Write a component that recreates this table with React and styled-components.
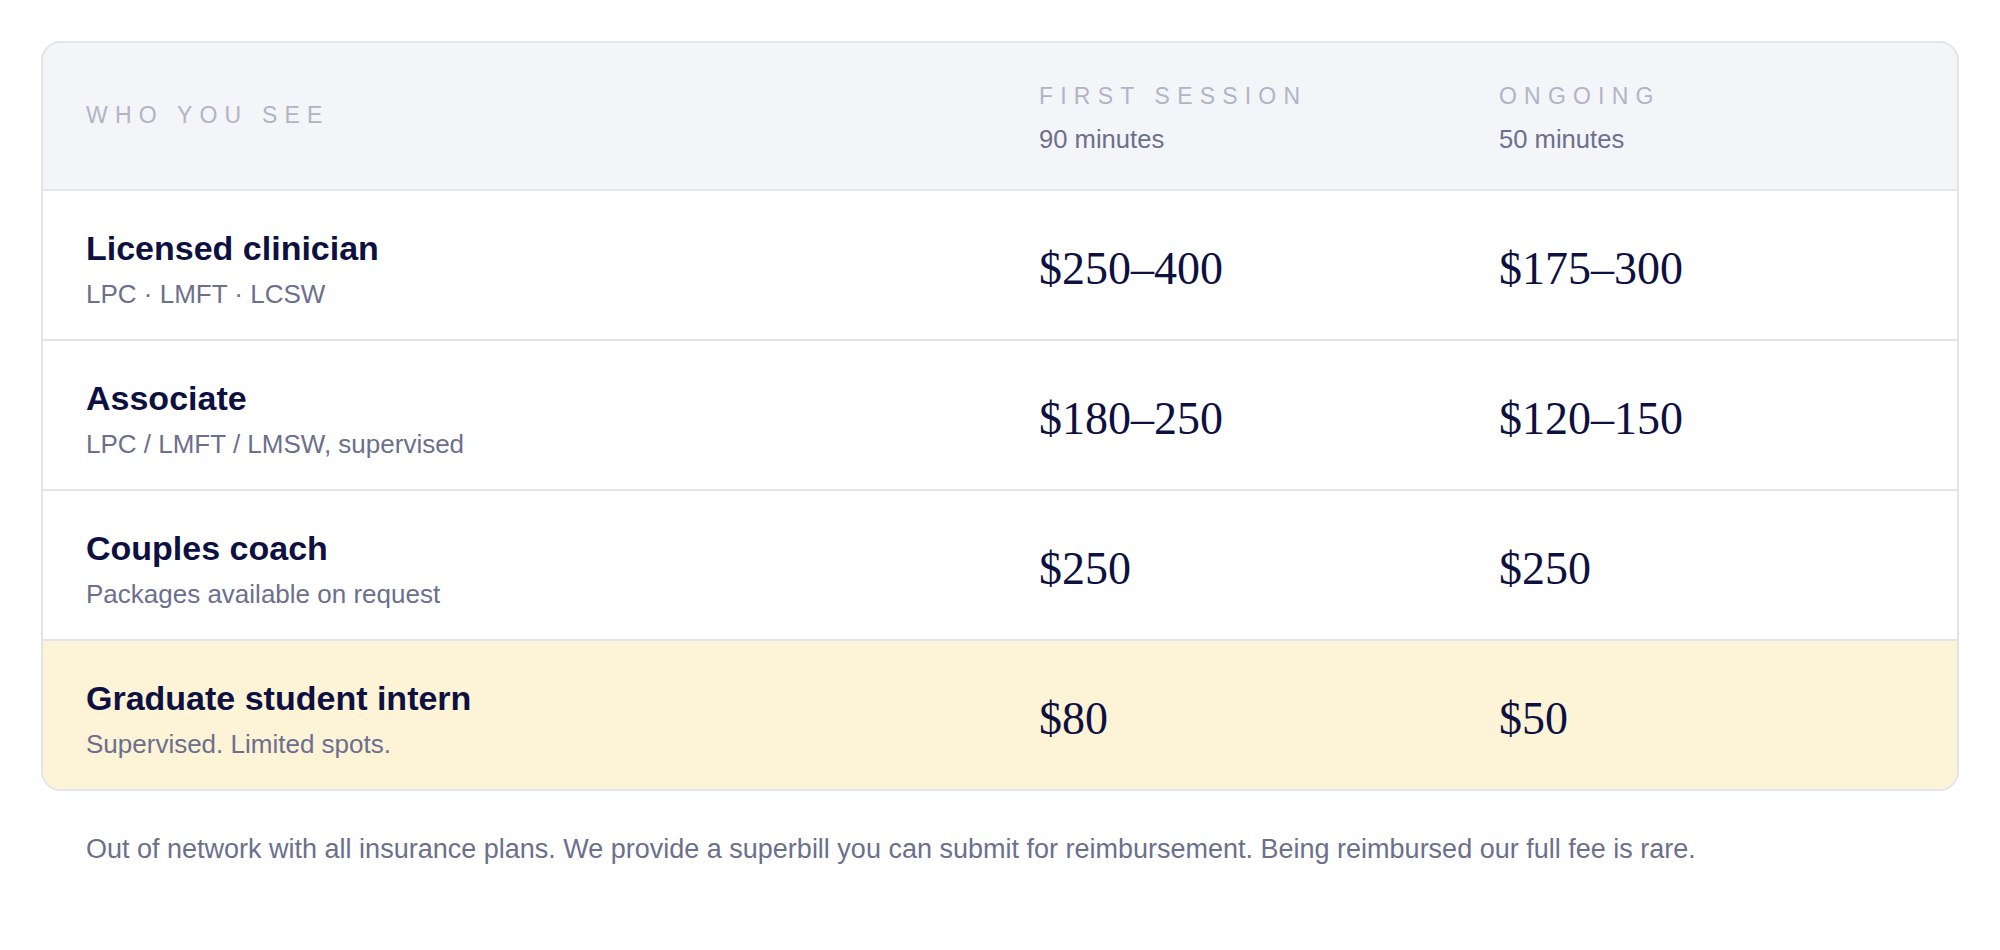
import React from "react";
import styled, { createGlobalStyle } from "styled-components";

const Global = createGlobalStyle`
  html, body { margin: 0; padding: 0; background: #ffffff; }
  body { font-family: "Liberation Sans", Arial, sans-serif; }
`;

const Page = styled.div`
  padding: 41px 41px 0;
`;

const Card = styled.div`
  border: 2px solid #e3e4e9;
  border-radius: 20px;
  overflow: hidden;
  background: #ffffff;
`;

const Grid = styled.div`
  display: grid;
  grid-template-columns: 953px 460px 1fr;
  align-items: center;
  box-sizing: border-box;
  padding: 0 43px;
  min-height: ${(p) => p.$h}px;
  background: ${(p) => p.$bg};
  border-bottom: ${(p) => (p.$last ? "none" : "2px solid #e3e4e9")};
`;

const Label = styled.div`
  font-size: 23px;
  line-height: 1.2;
  letter-spacing: 7.2px;
  text-transform: uppercase;
  color: #b2b4c4;
`;

const HeadCell = styled.div`
  display: flex;
  flex-direction: column;
  gap: 10px;
  padding-top: ${(p) => p.$offset || 0}px;
`;

const Duration = styled.div`
  font-size: 25.6px;
  line-height: 1.5;
  color: #6c6f8d;
`;

const NameCell = styled.div`
  display: flex;
  flex-direction: column;
  gap: 4px;
  padding-top: 10px;
`;

const Title = styled.div`
  font-size: 34px;
  line-height: 1.35;
  font-weight: 700;
  color: #0d1040;
`;

const Sub = styled.div`
  font-size: 26px;
  line-height: 1.5;
  color: #6c6f8d;
`;

const Price = styled.div`
  font-family: "Liberation Serif", "Times New Roman", serif;
  font-size: 46px;
  line-height: 1;
  padding-top: 7px;
  color: #0d1040;
`;

const Note = styled.p`
  margin: 0;
  padding: 38px 45px 0;
  font-size: 27px;
  line-height: 1.5;
  color: #6c6f8d;
`;

const rows = [
  { title: "Licensed clinician", sub: "LPC · LMFT · LCSW", first: "$250–400", ongoing: "$175–300" },
  { title: "Associate", sub: "LPC / LMFT / LMSW, supervised", first: "$180–250", ongoing: "$120–150" },
  { title: "Couples coach", sub: "Packages available on request", first: "$250", ongoing: "$250" },
  { title: "Graduate student intern", sub: "Supervised. Limited spots.", first: "$80", ongoing: "$50", highlight: true },
];

export default function App() {
  return (
    <Page>
      <Global />
      <Card>
        <Grid $h={148} $bg="#f4f5f8">
          <Label>Who you see</Label>
          <HeadCell $offset={9}>
            <Label>First session</Label>
            <Duration>90 minutes</Duration>
          </HeadCell>
          <HeadCell $offset={9}>
            <Label>Ongoing</Label>
            <Duration>50 minutes</Duration>
          </HeadCell>
        </Grid>
        {rows.map((r, i) => (
          <Grid
            key={r.title}
            $h={i === rows.length - 1 ? 148 : 150}
            $bg={r.highlight ? "#fdf4d8" : "#ffffff"}
            $last={i === rows.length - 1}
          >
            <NameCell>
              <Title>{r.title}</Title>
              <Sub>{r.sub}</Sub>
            </NameCell>
            <Price>{r.first}</Price>
            <Price>{r.ongoing}</Price>
          </Grid>
        ))}
      </Card>
      <Note>
        Out of network with all insurance plans. We provide a superbill you can submit for reimbursement. Being reimbursed our full fee is rare.
      </Note>
    </Page>
  );
}
